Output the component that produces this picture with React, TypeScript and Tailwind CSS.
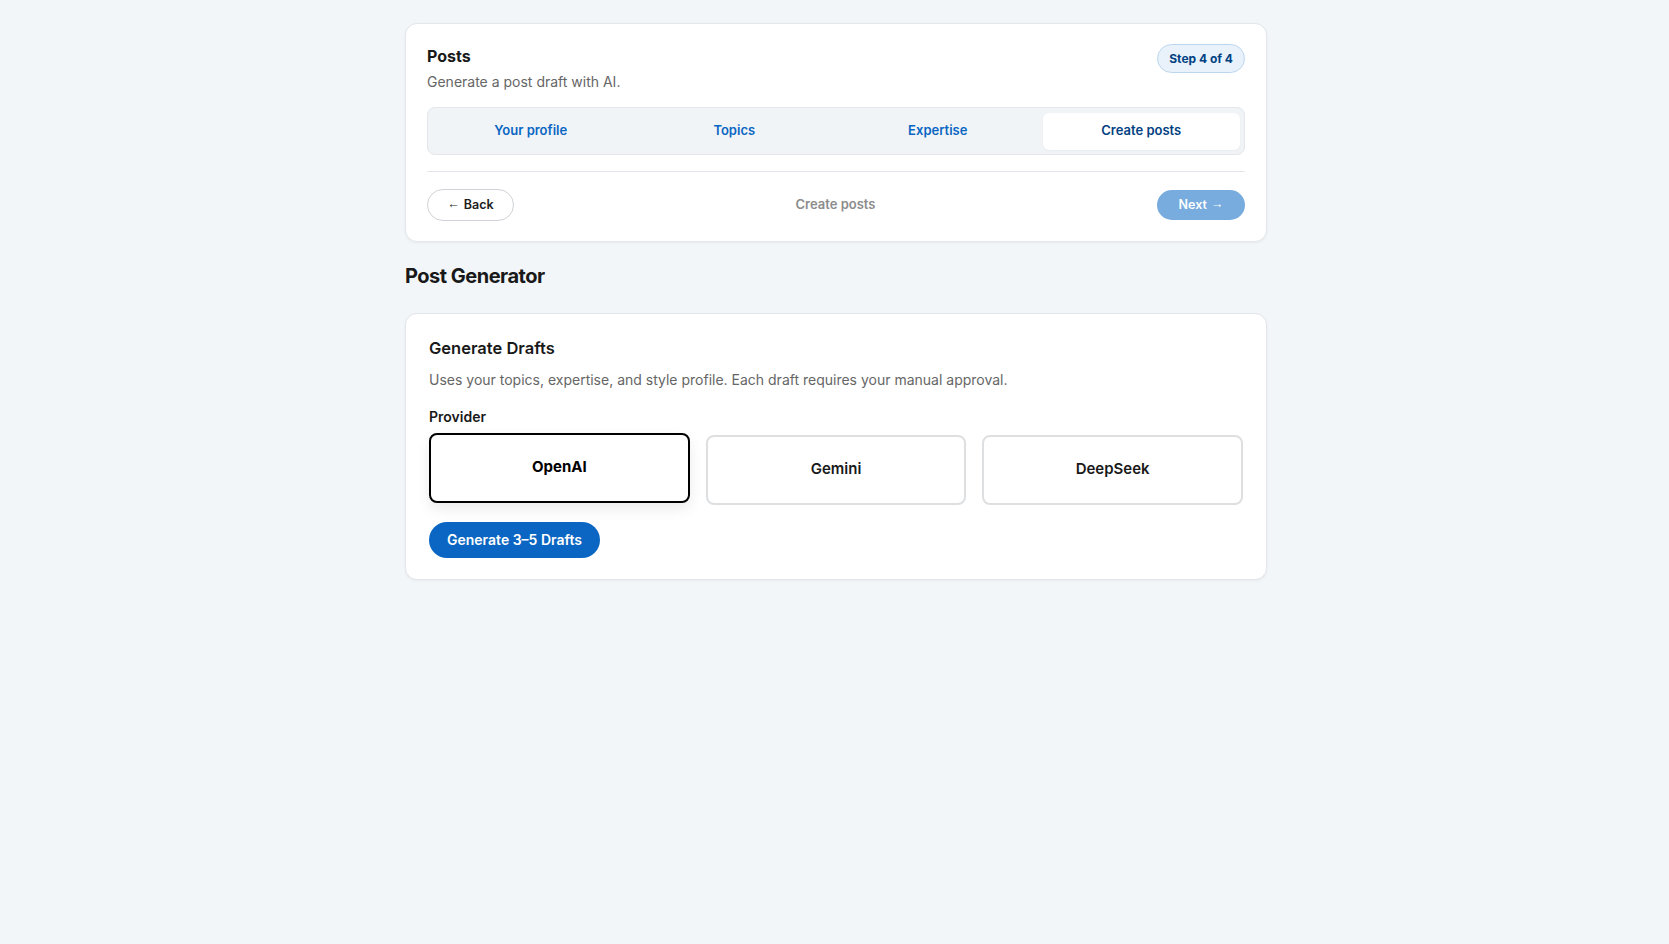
import { useState } from "react"

const steps = [
    { id: 1, label: "Your profile" },
    { id: 2, label: "Topics" },
    { id: 3, label: "Expertise" },
    { id: 4, label: "Create posts" },
]

const providers = [
    { id: "openai", label: "OpenAI" },
    { id: "gemini", label: "Gemini" },
    { id: "deepseek", label: "DeepSeek" },
]

const Arrow = ({ children }: { children: string }) => (
    <span className="relative -top-px font-['Liberation_Sans',sans-serif] font-normal">{children}</span>
)

export default function App() {
    const [activeStep] = useState(4)
    const [provider, setProvider] = useState("openai")

    return (
        <main
            className="min-h-screen bg-[#f3f6f8] pl-[3px] text-[#1d1d1d]"
            style={{ fontFamily: "Inter, 'Noto Sans', 'Liberation Sans', sans-serif" }}
        >
            <div className="mx-auto w-[862px] pt-[23px]">
                {/* stepper card */}
                <section className="rounded-xl border border-[#e3e6ea] bg-white px-[21px] pt-[20px] pb-[20px] shadow-[0_1px_3px_rgba(0,0,0,0.05)]">
                    <div className="flex items-start justify-between">
                        <div>
                            <h1 className="text-base font-bold leading-6 text-[#191919]">Posts</h1>
                            <p className="mt-1 text-sm leading-5 text-[#666666]">Generate a post draft with AI.</p>
                        </div>
                        <span className="flex h-[29px] items-center rounded-full border border-[#bcd6f0] bg-[#e9f2fb] px-[11px] text-[12px] font-bold text-[#004182]">
                            Step 4 of 4
                        </span>
                    </div>

                    <div className="mt-[15px] grid h-[48px] grid-cols-4 items-center gap-1.5 rounded-lg border border-[#e3e6ea] bg-[#f1f4f7] px-1">
                        {steps.map((step) => (
                            <button
                                key={step.id}
                                className={
                                    step.id === activeStep
                                        ? "h-[37px] rounded-md bg-white text-[13px] font-semibold text-[#004182] shadow-[0_1px_2px_rgba(0,0,0,0.04)]"
                                        : "h-[37px] rounded-md text-[13px] font-semibold text-[#0a66c2]"
                                }
                            >
                                {step.label}
                            </button>
                        ))}
                    </div>

                    <div className="mt-[16px] border-t border-[#e3e6ea]" />

                    <div className="mt-[17px] flex items-center justify-between">
                        <button className="flex h-[32px] w-[87px] items-center justify-center gap-1 rounded-full border border-[#d0d3d7] bg-white text-[12.5px] font-semibold text-[#1d1d1d]">
                            <Arrow>←</Arrow> Back
                        </button>
                        <p className="text-[13px] font-semibold text-[#8c8c8c]">Create posts</p>
                        <button className="flex h-[30px] w-[88px] items-center justify-center gap-1 rounded-full bg-[#78abde] text-[12.5px] font-semibold text-white">
                            Next <Arrow>→</Arrow>
                        </button>
                    </div>
                </section>

                <h2 className="mt-[20px] text-xl font-bold leading-7 tracking-[-0.025em] text-[#191919]">Post Generator</h2>

                {/* generator card */}
                <section className="mt-[23px] rounded-xl border border-[#e3e6ea] bg-white px-[23px] pt-[24px] pb-[21px] shadow-[0_1px_3px_rgba(0,0,0,0.05)]">
                    <h3 className="text-[16.5px] font-semibold leading-tight text-[#191919]">Generate Drafts</h3>
                    <p className="mt-[11px] text-sm leading-5 text-[#666666]">
                        Uses your topics, expertise, and style profile. Each draft requires your manual approval.
                    </p>

                    <p className="mt-[17px] text-sm font-semibold leading-5 text-[#191919]">Provider</p>

                    <div className="mt-2 grid grid-cols-3 gap-4">
                        {providers.map((p) => (
                            <button
                                key={p.id}
                                onClick={() => setProvider(p.id)}
                                className={
                                    provider === p.id
                                        ? "h-[70px] -translate-y-0.5 rounded-lg border-2 border-black bg-white text-[15px] font-bold text-black shadow-[0_6px_14px_rgba(0,0,0,0.08)]"
                                        : "h-[70px] rounded-lg border-2 border-[#dedfe1] bg-white text-[15px] font-semibold text-[#191919]"
                                }
                            >
                                {p.label}
                            </button>
                        ))}
                    </div>

                    <button className="mt-[17px] h-[36px] rounded-full bg-[#0a66c2] px-[18px] text-sm font-semibold text-white">
                        Generate 3–5 Drafts
                    </button>
                </section>
            </div>
        </main>
    )
}
